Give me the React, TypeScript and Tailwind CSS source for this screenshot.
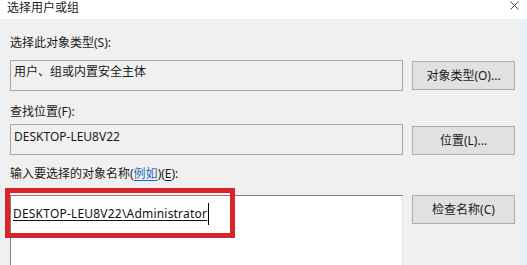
import React from "react";

export default function App() {
  const font = "font-['Noto_Sans','Noto_Sans_CJK_SC',sans-serif]";
  return (
    <div className={`relative w-[527px] h-[265px] overflow-hidden flex flex-col bg-[#f0f0f0] text-[12px] leading-[16px] text-[#1a1a1a] ${font}`}>
      {/* Title bar */}
      <div className="h-[19px] bg-white flex items-start justify-between shrink-0">
        <div className="pl-[7px] pt-[1px] text-[12px] leading-[13px] text-[#222]">选择用户或组</div>
        <svg className="mr-[8px] mt-[1px]" width="9" height="9" viewBox="0 0 9 9">
          <path d="M0.5 0.5 L8.5 8.5 M8.5 0.5 L0.5 8.5" stroke="#444" strokeWidth="1" fill="none" />
        </svg>
      </div>

      {/* Body */}
      <div className="flex-1 flex min-h-0">
        <div className="w-[2px] bg-[#e9eff6] shrink-0" />
        <div className="flex-1 flex pl-[8px] min-h-0">
          {/* Left column */}
          <div className="w-[393px] flex flex-col min-h-0">
            <div className="mt-[16px] h-[16px] whitespace-nowrap">选择此对象类型(S):</div>
            <div className="mt-[9px] h-[31px] border border-[#a6a6a6] bg-[#f0f0f0] pl-[3px] pt-[3px]">
              用户、组或内置安全主体
            </div>
            <div className="mt-[13px] h-[16px] whitespace-nowrap">查找位置(F):</div>
            <div className="mt-[4px] h-[31px] border border-[#a6a6a6] bg-[#f0f0f0] pl-[3px] pt-[4px]">
              DESKTOP-LEU8V22
            </div>
            <div className="mt-[11px] h-[16px] whitespace-nowrap">
              {"输入要选择的对象名称("}<span className="text-[#1a66c2] underline underline-offset-2">例如</span>{")("}<span className="underline underline-offset-2">E</span>{"):"}
            </div>
            <div className="mt-[13px] flex-1 bg-white border-t border-l border-t-[#7f7f7f] border-l-[#7f7f7f] border-r border-r-[#e2e2e2] pl-[2px] pt-[7px]">
              <div className="flex items-center">
                <span className="underline underline-offset-2 text-[#111] whitespace-nowrap tracking-[0.2px]">DESKTOP-LEU8V22\Administrator</span>
                <span className="inline-block w-px h-[22px] bg-black ml-[1px]" />
              </div>
            </div>
          </div>
          {/* Right column */}
          <div className="ml-[9px] w-[103px] flex flex-col">
            <button className="mt-[42px] h-[29px] bg-[#e1e1e1] border border-[#adadad] text-[#1a1a1a] flex items-center justify-center whitespace-nowrap">
              对象类型(O)...
            </button>
            <button className="mt-[36px] h-[29px] bg-[#e1e1e1] border border-[#adadad] text-[#1a1a1a] flex items-center justify-center whitespace-nowrap">
              位置(L)...
            </button>
            <button className="mt-[40px] h-[29px] bg-[#e1e1e1] border border-[#adadad] text-[#1a1a1a] flex items-center justify-center whitespace-nowrap">
              检查名称(C)
            </button>
          </div>
          <div className="w-[6px] shrink-0" />
        </div>
        <div className="w-[6px] bg-[#e9eff6] shrink-0" />
      </div>

      {/* Red annotation box */}
      <div className="absolute left-[5px] top-[188px] w-[230px] h-[50px] border-[5px] border-[#d9242c]" />
    </div>
  );
}
